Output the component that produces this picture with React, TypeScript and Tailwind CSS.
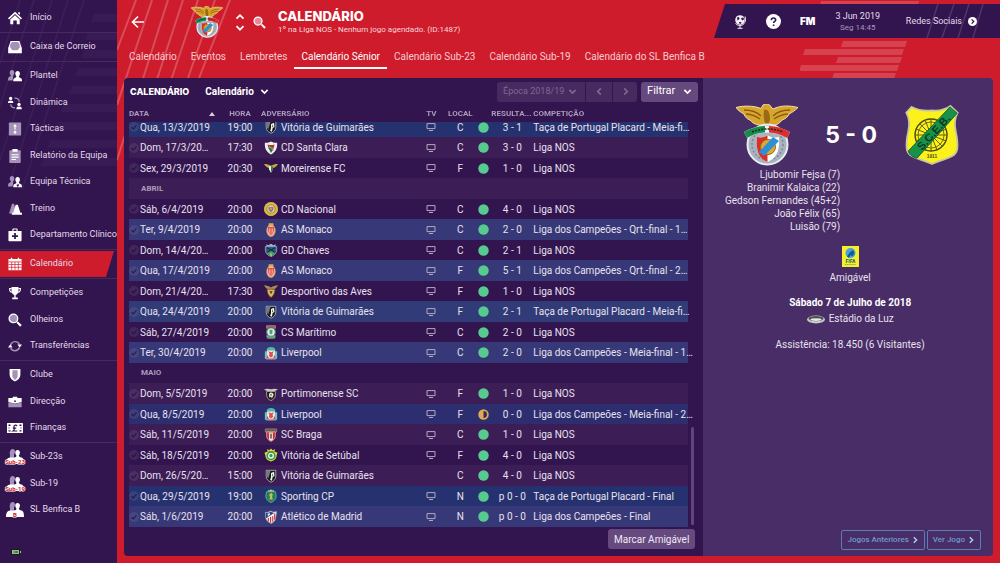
import { useLayoutEffect, useRef, type ReactNode } from "react";

type IconProps = { className?: string };

const DIM = "#a592b8";

/* ---------- sidebar icons ---------- */

const People = ({ left = DIM, right = "#fff" }: { left?: string; right?: string }) => (
  <>
    <g fill={left}>
      <path d="M4.600 1.200c1.700 0 2.600 1.200 2.600 2.800 0 1.500-.6 2.600-1.200 3.300L5.600 11 5 13H0c0-3 .8-3.800 3-4.600.5-.2.500-.8.300-1.200C2.500 6.500 2 5.500 2 4c0-1.600.9-2.800 2.600-2.800z" />
    </g>
    <g fill={right}>
      <path d="M11 2.200c1.700 0 2.600 1.200 2.600 2.800 0 1.500-.6 2.500-1.200 3.200 0 1 .4 1.300 1.400 1.700 1.700.6 2.200 1.400 2.200 4.100H6c0-2.700.5-3.500 2.200-4.100 1-.4 1.400-.7 1.400-1.700C9 7.500 8.400 6.500 8.400 5c0-1.600.9-2.800 2.600-2.800z" />
    </g>
  </>
);

const icons: Record<string, ReactNode> = {
  home: (
    <g fill="#fff">
      <path d="M8 .8 16 8.300l-1.300 1.300L8 3.400 1.300 9.600 0 8.300z" />
      <path d="M8 4.800 13.400 9.800V15H10v-4.200H6V15H2.600V9.800z" />
      <path d="M11.600 1.400h2v3.200l-2-1.800z" />
    </g>
  ),
  inbox: (
    <>
      <path d="M3 1h10l2.800 8.200V15H.2V9.200z" fill="#fff" />
      <path d="M4.500 2.200h7c1.800 1.600 2.500 4 2 6.400L11 11.600H5L2.500 8.600c-.5-2.400.2-4.800 2-6.400z" fill={DIM} />
    </>
  ),
  squad: <People />,
  dynamics: (
    <>
      <g fill="#fff">
        <circle cx="3" cy="2.800" r="1.900" />
        <path d="M0 8c0-2 .8-2.800 3-2.800S6 6 6 8z" />
        <circle cx="12.600" cy="9.600" r="1.900" />
        <path d="M9.600 15c0-2.200.8-3 3-3s3.200.8 3.200 3z" />
      </g>
      <g fill="none" stroke={DIM} strokeWidth="1.500">
        <path d="M7.400 2.400c3-.4 5.200 1.200 5.400 4" />
        <path d="M3 9.600c.4 2.600 2 4 5 4" />
      </g>
    </>
  ),
  tactics: (
    <>
      <rect x="1" y=".5" width="14" height="15" rx="1" fill={DIM} />
      <g fill="#fff">
        <path d="M8 2.200 10.200 5H8.700v3H7.300V5H5.800z" />
        <circle cx="8" cy="11.800" r="1.500" />
        <circle cx="8" cy="9" r=".7" />
      </g>
    </>
  ),
  report: (
    <>
      <rect x="1.500" y="1.500" width="13" height="14.500" rx="1" fill={DIM} />
      <g fill="#fff">
        <rect x="5" y="0" width="6" height="3" rx=".6" />
        <path d="M4 6h8v1.200H4zM4 8.700h8v1.200H4zM4 11.400h5v1.200H4z" />
      </g>
    </>
  ),
  staff: (
    <>
      <People />
      <path d="m10.200 9.800 1 1.600 1-1.600.2 2.600-1.200 1.200-1.200-1.200z" fill="#32144f" />
    </>
  ),
  training: (
    <>
      <path d="M4.600 2H7l2.400 11H1.200z" fill={DIM} />
      <path d="M8.800 3h2.400l3 9.400H16V14.500H4.400v-2.100H6z" fill="#fff" />
    </>
  ),
  medical: (
    <>
      <path d="M5 3.400V1.400C5 .8 5.400.6 6 .6h4c.6 0 1 .2 1 .8v2h4.500V14c0 .6-.3 1-1 1h-13c-.7 0-1-.4-1-1V3.400zm1.300 0h3.400V1.800H6.300z" fill="#fff" />
      <path d="M7 5.800h2v2.400h2.400v2H9v2.400H7v-2.400H4.600v-2H7z" fill="#32144f" />
    </>
  ),
  calendar: (
    <>
      <g fill="#fff">
        <path d="M3.200.8h1.600v3H3.200zM11.200.8h1.600v3h-1.600z" />
        <rect x=".5" y="2.200" width="15" height="12.800" rx=".6" />
      </g>
      <path d="M.5 5.600h15M.5 8.600h15M.5 11.800h15M4.200 5.600V15M8 5.600V15M11.800 5.600V15" stroke="#ce1c2c" strokeWidth=".8" />
    </>
  ),
  trophy: (
    <g fill="#fff">
      <path d="M4 1h8v4.500c0 2.600-1.500 4.500-3.200 4.900V13h2.400v2H4.800v-2h2.400v-2.600C5.500 10 4 8.100 4 5.500z" />
      <path d="M4 3H1.800c0 2.400.8 4 2.800 4M12 3h2.200c0 2.400-.8 4-2.800 4" fill="none" stroke="#fff" strokeWidth="1.200" />
    </g>
  ),
  search: (
    <>
      <path d="m9.600 11 1.500-1.500 4.600 4.300-1.800 1.900z" fill="#fff" />
      <circle cx="6.200" cy="6.200" r="4.900" fill={DIM} stroke="#fff" strokeWidth="1.500" />
    </>
  ),
  transfers: (
    <>
      <path d="M3 9.200C2.400 5.600 4.800 3 8 3c2.300 0 4.200 1.200 5 3.200" fill="none" stroke={DIM} strokeWidth="1.700" />
      <path d="M10.800 6.200H16L13.400 9.600z" fill="#fff" />
      <path d="M13.200 9.600C12.200 12 10.400 13.400 8 13.400c-2.200 0-4-1-5-3" fill="none" stroke={DIM} strokeWidth="1.700" />
      <path d="M5.200 9.800H0L2.600 6.400z" fill="#fff" />
    </>
  ),
  shield: (
    <>
      <path d="M1.800 1h12.400v6.500c0 3.800-2.600 6.400-6.200 8-3.600-1.600-6.200-4.200-6.200-8z" fill="#fff" />
      <path d="M5 2.500h6V10c-.6 1.600-1.600 2.800-3 3.600-1.400-.8-2.400-2-3-3.600z" fill={DIM} />
    </>
  ),
  briefcase: (
    <>
      <path d="M5.400 3.400V2h5.200v1.400h5V8l-6.200 1.600H6.600L.4 8V3.400z" fill="#fff" />
      <path d="M.4 8.400 6.600 10h2.800l6.200-1.600V14H.4z" fill={DIM} />
      <circle cx="8" cy="7" r="1" fill="#32144f" />
    </>
  ),
};

const MenuIcon = ({ name }: { name: string }) => {
  if (name === "finance")
    return (
      <svg viewBox="0 0 16 10" className="h-[10px] w-4" aria-hidden="true">
        <rect width="16" height="10" rx=".6" fill="#fff" />
        <path d="M1.500 1.500h2v1.400h-2zM12.500 1.500h2v1.400h-2zM1.500 7.200h2v1.400h-2zM12.500 7.200h2v1.400h-2zM1.500 4.400h1v1.200h-1zM13.500 4.400h1v1.200h-1z" fill="#32144f" />
        <path d="M10 3.100C9.400 1.600 6.800 1.600 7 3.800L7.300 6c0 1-.5 1.600-1.200 2h4.200M5.800 5.200h3.400" fill="none" stroke="#32144f" strokeWidth="1.200" />
      </svg>
    );
  if (name.startsWith("team:"))
    return (
      <svg viewBox="0 0 18 16" className="h-4 w-[18px] overflow-visible" aria-hidden="true">
        <path d="M6.700 0C8.200 0 9 1.100 9 2.600 9 4 8.400 5 8 5.600V9H4V5.600C3.600 5 3.600 4 4 2.600 4.200 1.100 5.200 0 6.700 0z" fill={DIM} />
        <path d="M11.600 1c1.500 0 2.300 1 2.300 2.500 0 1.400-.6 2.300-1.100 2.900.1 1.200 1.200 1.600 2.600 2.100C17.500 9.300 18 11 18 15H0C0 10.500 1.500 9 4 8.500h4c1.600-.3 2.600-.8 2.400-2.100-.6-.6-1.100-1.500-1.100-2.900C9.300 2 10.100 1 11.600 1z" fill="#fff" />
        <text
          x="9"
          y="14.500"
          fontSize="6"
          fontWeight="700"
          textAnchor="middle"
          fill="#ce1c2c"
          stroke="#fff"
          strokeWidth="1.200"
          paintOrder="stroke"
          fontFamily="Roboto, sans-serif"
        >
          {name.slice(5)}
        </text>
      </svg>
    );
  return (
    <svg viewBox="0 0 16 16" className="size-[14px]" aria-hidden="true">
      {icons[name]}
    </svg>
  );
};

/* ---------- club crests ---------- */

const Benfica = ({ className }: IconProps) => (
  <svg viewBox="0 0 62 62" className={className} role="img" aria-label="SL Benfica">
    <path d="M0 3.500c8-2 17-2 25 1l2-3.500c3-2 7-1 8 2l2 2c8-4 17-3.500 25-1.500-3 3-6 5-9 6.500-1 3-4 5-7 6-2 3-5 5-8 5l-3 3H27l-4-3c-4-.5-7-2.500-9-5-3-1-5-3-6-6C5 8.500 2 6.500 0 3.500z" fill="#d8a62a" stroke="#f1ddb0" strokeWidth="1" />
    <path d="M8 6c7 0 13 2 17 6M10 10c6 .5 10 2 14 5M54 6c-7 0-13 2-17 6M52 10c-6 .5-10 2-14 5" stroke="#8a5c12" strokeWidth="1.500" fill="none" />
    <path d="M28 6c2-1 5 0 5 3 2 5 1 9-2 13-3-4-4-9-3-16z" fill="#9a6a16" />
    <circle cx="31.500" cy="40.500" r="20" fill="#a9b3c0" stroke="#e8edf2" strokeWidth="2" />
    <circle cx="31.500" cy="40.500" r="15.500" fill="none" stroke="#7d8897" strokeWidth="1.500" strokeDasharray="2 2" />
    <path d="M21 33c4 1 7 .5 10.500-1.500C35 33.500 39 34 43 33c1 13-2 21-11.500 25C22 54 20 46 21 33z" fill="#fff" />
    <path d="M21 33c4 1 7 .5 10.500-1.500V58C22 54 20 46 21 33z" fill="#dc2f2c" />
    <circle cx="32" cy="43" r="7.500" fill="#e0a92c" stroke="#9a6a16" />
    <path d="m23 48 14-15 6 4-15 15z" fill="#2f8fd6" />
    <path d="M8 28c14-8 32-8 46 0l-3 6c-12-7-28-7-40 0z" fill="#f4f4f4" />
    <path d="M8 28c7-4 14-6 21-6v6.500c-6 .2-12 2-18 5.500z" fill="#178a4c" />
    <path d="M33 22c7 0 14 2 21 6l-3 6c-6-3.500-12-5.300-18-5.500z" fill="#dc2f2c" />
    <path d="M16 28c10-4 21-4 31 0" stroke="#10301d" strokeWidth="1.500" strokeDasharray="2 1.200" fill="none" />
  </svg>
);

const Sceb = ({ className }: IconProps) => (
  <svg viewBox="-1 -1 56 64" className={className} role="img" aria-label="SCEB">
    <path
      d="M6 2C13 5.500 19 6.500 27 5.500 34 6.500 40 5 46 1L53.500 8C50 14 50 20 51.500 27 53 34 54 40 53 46 51 55 40 55 27 61 14 55 3 55 1 46 0 40 1 34 2.500 27 4 20 4 14 .5 8z"
      fill="#fbf21c"
      stroke="#c9c4a4"
      strokeWidth="1.800"
    />
    <g stroke="#4e4a10" fill="none">
      <circle cx="26" cy="31" r="16.500" strokeWidth="1.500" />
      <circle cx="26" cy="31" r="13.500" strokeWidth=".8" />
      <path d="M26 15v32M10 31h32M14.700 19.700l22.600 22.600M14.700 42.300l22.600-22.600M20 16l12 30M32 16 20 46M11 25l30 12M11 37l30-12" strokeWidth=".9" />
    </g>
    <path d="M2.500 47.500 45.500 2 53 8.500 11.500 55C6 53.500 3.500 51 2.500 47.500z" fill="#17924a" stroke="#0b4f27" strokeWidth=".8" />
    <text x="29" y="33" fontSize="11.500" fontWeight="700" textAnchor="middle" transform="rotate(-48 28 29)" fill="#0c3a1d" fontFamily="Liberation Sans, sans-serif">
      S.C.E.B.
    </text>
    <text x="27" y="54.500" fontSize="5" fontWeight="700" textAnchor="middle" fill="#4e4a10" fontFamily="Liberation Sans, sans-serif">
      1911
    </text>
  </svg>
);

const SHIELD = "M2.500 1.500h11V8c0 3.600-2.300 5.800-5.500 7.200C4.800 13.800 2.500 11.600 2.500 8z";

const crests: Record<string, ReactNode> = {
  "Vitória de Guimarães": (
    <>
      <path d={SHIELD} fill="#17181b" stroke="#d5d5d5" strokeWidth=".8" />
      <path d="M3 2h4.500L5 10.500C3.700 9.500 3 8 3 6z" fill="#77797c" />
      <path d="M8 4.500 11.500 3l.5 5-2 1-1 4.500-2-1L8 9z" fill="#f1f1f1" />
      <path d="m9.500 5 1 2-1 1.500z" fill="#17181b" />
    </>
  ),
  "CD Santa Clara": (
    <>
      <path d="M1 2c2.500.3 5-.2 7-1.300C10 1.800 12.500 2.300 15 2c.4 6-1.500 10.700-7 13.300C2.500 12.700.6 8 1 2z" fill="#f3eeee" />
      <path d="M4 4c3 1 5 .8 8 0l-1 4.500-3-1.700L5 8z" fill="#a43b3f" />
      <path d="m5 8 3-1.400L11 9l-3 4.600z" fill="#2d7046" />
      <path d="m6 6 4.500 4" stroke="#d9b44a" />
    </>
  ),
  "Moreirense FC": (
    <>
      <path d="M0 3.500c3-.2 5 .6 8 1.800 3-1.200 5-2 8-1.800-1.500 2.600-3.500 4.200-5.500 4.400L8 13 5.500 7.900C3.500 7.700 1.500 6.100 0 3.500z" fill="#c7a63b" />
      <path d="M5.800 6h4.400v3.500L8 13.500 5.800 9.500z" fill="#f4f4ea" />
      <path d="M8 6h2.200v3.500L8 13z" fill="#1f7a4a" />
    </>
  ),
  "CD Nacional": (
    <>
      <circle cx="8" cy="8" r="7.700" fill="#e5b62d" stroke="#f4dd94" strokeWidth=".6" />
      <circle cx="8" cy="8" r="4.800" fill="#d8cfae" stroke="#97701c" strokeWidth=".8" />
      <path d="M5 6h6l-.6 3.500L8 11.500 5.600 9.500z" fill="#6c6f86" />
      <path d="M6.500 7.200h3v1.600h-3z" fill="#e5b62d" />
    </>
  ),
  "AS Monaco": (
    <>
      <path d="M5 3.200 5.400.4h5.200l.4 2.800z" fill="#dcae45" />
      <ellipse cx="8" cy="8.700" rx="4.800" ry="6.600" fill="#f0b7a8" stroke="#d9a257" strokeWidth="1" />
      <path d="M4.400 4.500h7.200L11 10l-2.500 4h-1L5 10z" fill="#dc4b47" />
      <path d="M6.300 6v5M8 6v8M9.700 6v5" stroke="#f6d4c9" strokeWidth=".7" />
    </>
  ),
  "GD Chaves": (
    <>
      <path d="M3 4 2.500 1.500 5 2.500 8 .8l3 1.700 2.500-1L13 4z" fill="#a9b5bd" />
      <path d="M1.500 4h13v4c0 4-3 6.200-6.500 7.500C4.500 14.200 1.500 12 1.500 8z" fill="#2d5b93" stroke="#a9b5bd" strokeWidth=".8" />
      <path d="M3 11.500 8 9l5 2.500c-1.300 1.600-3 2.600-5 3.400-2-.8-3.700-1.800-5-3.400z" fill="#48a04a" />
      <path d="m3.500 5.500 9 5m0-5-9 5" stroke="#192a3f" strokeWidth="1.200" />
      <path d="M8 12v3" stroke="#e6efe6" />
    </>
  ),
  "Desportivo das Aves": (
    <>
      <path d="M0 1.500c3 .2 5.500 1 8 2.500 2.500-1.500 5-2.300 8-2.500-1.600 3-3.400 4.500-6 5L8 9 6 6.500C3.400 6 1.600 4.500 0 1.500z" fill="#a58e57" />
      <path d="M3.500 6h9c0 4-1.500 7.500-4.500 9.500C5 13.500 3.500 10 3.500 6z" fill="#d7bd64" stroke="#5b431f" strokeWidth=".8" />
      <path d="m6 8 2 4 2-4z" fill="#99352e" />
    </>
  ),
  "CS Marítimo": (
    <>
      <path d="M3 .8h10v3H3z" fill="#bb4650" stroke="#e9e2d9" strokeWidth=".5" />
      <circle cx="8" cy="8" r="5" fill="#e7ebe4" stroke="#368367" strokeWidth="1.400" />
      <path d="M6.300 5.500h3.400v4l-1.700 1.300-1.700-1.300z" fill="#4f9c7e" />
      <path d="M3 12.300h10l-1 2.900H4z" fill="#4c9d77" stroke="#e9e2d9" strokeWidth=".5" />
    </>
  ),
  Liverpool: (
    <>
      <path d="M3 4C4 .2 12 .2 13 4l-.5 2h-9z" fill="#50b7aa" />
      <path d="M1 6h2.500v8.500H1zM12.500 6H15v8.500h-2.500z" fill="#6fc4b9" />
      <path d="M3.500 5h9v4.500c0 2.500-2 4.500-4.500 5.500-2.500-1-4.500-3-4.500-5.500z" fill="#f0ece8" />
      <path d="m5 6 3 1.200L11 6l-1.200 3 .8 2L8 13.500 5.400 11l.8-2z" fill="#dc4f58" />
      <path d="M2.500 12.500 8 14.300l5.500-1.800v2.900h-11z" fill="#d8858a" />
    </>
  ),
  "Portimonense SC": (
    <>
      <path d="M0 2.500c3-.8 5-.8 8 0 3-.8 5-.8 8 0-2 2-5 2.700-8 2.700S2 4.500 0 2.500z" fill="#c9cac4" />
      <path d="M3 5h10v4c0 3.400-2 5.200-5 6.500C5 14.200 3 12.400 3 9z" fill="#1b1b1c" stroke="#d9cfaa" strokeWidth=".8" />
      <path d="M8 6.200c2 0 3 1.200 3 3L9 13l-1-2-1.800 1C5.300 9 5.500 6.200 8 6.200z" fill="#eae6dc" />
      <path d="m7.200 8 2 .8-1.400 1.600z" fill="#1b1b1c" />
    </>
  ),
  "SC Braga": (
    <>
      <path d="M1.500 1h13v3.500h-13z" fill="#6d5a51" stroke="#b7a391" strokeWidth=".6" />
      <path d="M3 4.500h10V9c0 3-2 5-5 6.300C5 14 3 12 3 9z" fill="#cf2f33" stroke="#e3d7ce" strokeWidth=".7" />
      <path d="M5.800 5h4.400v8.500L8 14.800l-2.200-1.300z" fill="#ece4df" />
      <path d="M7 6.500h2V12H7z" fill="#705f63" />
    </>
  ),
  "Vitória de Setúbal": (
    <>
      <path d="m4 4-.5-3L6 2.500 8 .5l2 2L12.500 1 12 4z" fill="#e8d22f" />
      <path d="M.5 5.500 4 4h8l3.500 1.500-1 2.500c0 4-2.500 6.300-6.500 7.300C4 14.300 1.500 12 1.500 8z" fill="#d6d935" />
      <circle cx="8" cy="8.800" r="4.300" fill="#e5f0e4" stroke="#2c9754" strokeWidth="1.600" />
      <path d="M8 6.500 10 8l-.8 2.400H6.800L6 8z" fill="#2c9754" />
    </>
  ),
  "Sporting CP": (
    <>
      <path d="M4.500 3 5 .8l1.500.8L8 .4l1.500 1.200L11 .8l.5 2.200z" fill="#b7cda6" />
      <path d="M3 3h10l1 5c0 3.600-2.500 6-6 7.500C4.500 14 2 11.600 2 8z" fill="#1b8158" stroke="#9fc2ad" strokeWidth=".7" />
      <path d="M6.500 5.500 9 4.500l1 2L9.200 9l1 3H6l1-3-1-1.500z" fill="#cfb95f" />
    </>
  ),
  "Atlético de Madrid": (
    <>
      <path d="M1.500 2.500c2 .4 4 0 6-1.500 2 1.500 4.500 1.600 7 .8L13 11c-1 2-3 3.400-5 4.500C5 14 2.500 12 2 9z" fill="#f3efef" stroke="#8fa0c0" strokeWidth=".7" />
      <path d="M5 9v4M7.500 8v6.500M10 7v6.500M12.200 4v7" stroke="#d13438" strokeWidth="1.300" />
      <path d="M2 3.200c2 .2 4-.2 5.500-1.300l4 1.500L2.400 9.500z" fill="#2c4684" />
      <path d="m4 4.500 2.500-1 .5 1.800L4.500 7z" fill="#e7e4e0" />
    </>
  ),
};

/* ---------- small glyphs ---------- */

const Chevron = ({ d, className }: { d: string; className: string }) => (
  <svg viewBox="0 0 10 10" className={className} aria-hidden="true">
    <path d={d} fill="none" stroke="currentColor" strokeWidth="1.800" />
  </svg>
);
const DOWN = "M1.500 3.200 5 6.700l3.500-3.500";
const UP = "M1.500 6.700 5 3.200l3.500 3.500";
const LEFT = "M6.500 1.500 3 5l3.500 3.500";
const RIGHT = "M3.500 1.500 7 5 3.500 8.500";

const Monitor = () => (
  <svg viewBox="0 0 10 8" className="mx-auto h-2 w-[10px] text-[#b3a7c4]" aria-label="TV" role="img">
    <path d="M1 .6h8v5H1z" fill="none" stroke="currentColor" />
    <path d="M3 7h4v1H3z" fill="currentColor" />
  </svg>
);

const Result = ({ draw }: { draw?: boolean }) => (
  <svg viewBox="0 0 12 12" className="mx-auto size-[11px]" role="img" aria-label={draw ? "Empate" : "Vitória"}>
    <circle cx="6" cy="6" r="5.700" fill={draw ? "#e3a94e" : "#57cb8f"} />
    {draw && <path d="M6 2.200a3.800 3.800 0 0 1 0 7.600z" fill="#2d2e6f" />}
  </svg>
);

const Tick = () => (
  <svg viewBox="0 0 10 10" className="size-[10px] shrink-0" aria-hidden="true">
    <circle cx="5" cy="5" r="5" fill="#fff" opacity=".08" />
    <path d="m2.600 5.200 1.700 1.600 3.200-3.400" fill="none" stroke="#1d0b38" strokeOpacity=".7" strokeWidth="1.200" />
  </svg>
);

/* ---------- data ---------- */

const menu: [string, string][][] = [
  [["home", "Início"]],
  [["inbox", "Caixa de Correio"]],
  [
    ["squad", "Plantel"],
    ["dynamics", "Dinâmica"],
    ["tactics", "Tácticas"],
    ["report", "Relatório da Equipa"],
    ["staff", "Equipa Técnica"],
    ["training", "Treino"],
    ["medical", "Departamento Clínico"],
  ],
  [["calendar", "Calendário"]],
  [
    ["trophy", "Competições"],
    ["search", "Olheiros"],
    ["transfers", "Transferências"],
  ],
  [
    ["shield", "Clube"],
    ["briefcase", "Direcção"],
    ["finance", "Finanças"],
  ],
  [
    ["team:Sub-23", "Sub-23s"],
    ["team:Sub-19", "Sub-19"],
    ["team:B", "SL Benfica B"],
  ],
];

const tabs = ["Calendário", "Eventos", "Lembretes", "Calendário Sénior", "Calendário Sub-23", "Calendário Sub-19", "Calendário do SL Benfica B"];

type Match = { date: string; time: string; team: string; venue: string; score: string; comp: string; draw?: boolean; noTv?: boolean };
type Row = Match | { month: string };

const m = (date: string, time: string, team: string, venue: string, score: string, comp: string, extra: Partial<Match> = {}): Match => ({
  date,
  time,
  team,
  venue,
  score,
  comp,
  ...extra,
});

const NOS = "Liga NOS";
const rows: Row[] = [
  m("Qua, 13/3/2019", "19:00", "Vitória de Guimarães", "C", "3 - 1", "Taça de Portugal Placard - Meia-fi…"),
  m("Dom, 17/3/20…", "17:30", "CD Santa Clara", "C", "3 - 0", NOS),
  m("Sex, 29/3/2019", "20:30", "Moreirense FC", "F", "1 - 0", NOS),
  { month: "ABRIL" },
  m("Sáb, 6/4/2019", "20:00", "CD Nacional", "C", "4 - 0", NOS),
  m("Ter, 9/4/2019", "20:00", "AS Monaco", "C", "2 - 0", "Liga dos Campeões - Qrt.-final - 1…"),
  m("Dom, 14/4/20…", "20:00", "GD Chaves", "C", "2 - 1", NOS),
  m("Qua, 17/4/2019", "20:00", "AS Monaco", "F", "5 - 1", "Liga dos Campeões - Qrt.-final - 2…"),
  m("Dom, 21/4/20…", "17:30", "Desportivo das Aves", "F", "1 - 0", NOS),
  m("Qua, 24/4/2019", "20:00", "Vitória de Guimarães", "F", "2 - 1", "Taça de Portugal Placard - Meia-fi…"),
  m("Sáb, 27/4/2019", "20:00", "CS Marítimo", "C", "2 - 0", NOS),
  m("Ter, 30/4/2019", "20:00", "Liverpool", "C", "2 - 0", "Liga dos Campeões - Meia-final - 1…"),
  { month: "MAIO" },
  m("Dom, 5/5/2019", "20:00", "Portimonense SC", "F", "1 - 0", NOS),
  m("Qua, 8/5/2019", "20:00", "Liverpool", "F", "0 - 0", "Liga dos Campeões - Meia-final - 2…", { draw: true }),
  m("Sáb, 11/5/2019", "20:00", "SC Braga", "C", "1 - 0", NOS),
  m("Sáb, 18/5/2019", "20:00", "Vitória de Setúbal", "F", "4 - 0", NOS),
  m("Dom, 26/5/20…", "15:00", "Vitória de Guimarães", "C", "4 - 0", NOS, { noTv: true }),
  m("Qua, 29/5/2019", "19:00", "Sporting CP", "N", "p 0 - 0", "Taça de Portugal Placard - Final"),
  m("Sáb, 1/6/2019", "20:00", "Atlético de Madrid", "N", "p 0 - 0", "Liga dos Campeões - Final"),
];

const rowColour = (comp: string) => {
  if (comp.startsWith("Taça")) return "bg-[#26326f] even:bg-[#303b77]";
  if (comp.startsWith("Liga dos")) return "bg-[#2d2e6f] even:bg-[#373877]";
  return "even:bg-[#3c1d56]";
};

const scorers = ["Ljubomir Fejsa (7)", "Branimir Kalaica (22)", "Gedson Fernandes (45+2)", "João Félix (65)", "Luisão (79)"];

/* ---------- sections ---------- */

const Sidebar = () => (
  <nav className="relative flex w-[117px] shrink-0 flex-col overflow-hidden bg-[#32144f] pt-[5px] text-[9px] text-[#e4dceb]">
    <svg viewBox="0 0 117 250" className="absolute top-0 left-0 h-[250px] w-full" aria-hidden="true">
      <g stroke="#fff" strokeOpacity=".05">
        <path d="M20 0-8 88M34 0-4 118M52 0 0 160M68 0 12 176M84 0 22 190" fill="none" strokeWidth="1.500" />
      </g>
      <g fill="#fff" fillOpacity=".03">
        <path d="M94 14h23v8H91zM88 32h29v8H85zM84 50h33v8H81zM78 68h39v8H75zM72 86h45v8H69zM64 104h53v8H61zM58 122h59v8H55zM50 140h67v8H47zM44 158h73v8H41z" />
      </g>
    </svg>
    {menu.map((group, g) => (
      <ul key={g} className={`relative ${g > 0 ? "mt-px border-t border-[#46295f] pt-px" : ""}`}>
        {group.map(([icon, label]) => (
          <li key={label} className="h-[26px] even:h-[27px]">
            <a
              href="#"
              className={`flex h-full items-center whitespace-nowrap ${
                label === "Calendário" ? "w-[114px] bg-[#ce1c2c] [clip-path:polygon(0_0,100%_0,calc(100%-8px)_100%,0_100%)]" : ""
              }`}
            >
              <span className="flex w-[30px] shrink-0 justify-center">
                <MenuIcon name={icon} />
              </span>
              {label}
            </a>
          </li>
        ))}
      </ul>
    ))}
    <svg viewBox="0 0 10 6" className="mt-auto mb-2 ml-[11px] h-[6px] w-[10px]" aria-label="Bateria" role="img">
      <rect width="9" height="6" rx=".5" fill="#1a1a12" />
      <path d="M1 1h7v4H1zM9 2h1v2H9z" fill="#8fc48a" />
      <path d="M2 3h2M4.500 2.500h2v1h-2z" fill="none" stroke="#1a3a1a" strokeWidth=".6" />
    </svg>
  </nav>
);

const StatusBar = () => (
  <div className="relative ml-auto flex h-[34px] w-[286px] items-center bg-[#32144f] pr-[23px] pl-[19px] text-[9px] text-[#e4dceb] [clip-path:polygon(11px_0,100%_0,100%_100%,0_100%)]">
    <svg viewBox="0 0 60 34" className="absolute right-4 h-[34px] w-[60px]" aria-hidden="true">
      <path d="m14 0-11 34M30 0 18 34M45 0 34 34M59 0 49 34" stroke="#fff" strokeOpacity=".14" strokeWidth="1.500" />
    </svg>
    <button type="button" aria-label="Mundo">
      <svg viewBox="0 0 14 15" className="h-[15px] w-[14px]" aria-hidden="true">
        <circle cx="7" cy="6" r="4.800" fill="#f3eff6" />
        <path d="M4 3.500 6 3l.5 2-2 1.500zM8 4l2.500-.5.5 2L9 6.500zM6 8h2.500L8 9.800H6.500z" fill="#32144f" />
        <path d="M12 2.500c1.500 4-.5 9-5 9-2 0-3.500-.6-4.500-2M7 11.500V14M4.500 14.300h5" fill="none" stroke="#f3eff6" />
      </svg>
    </button>
    <button type="button" aria-label="Ajuda" className="ml-[19px]">
      <svg viewBox="0 0 15 15" className="size-[15px]" aria-hidden="true">
        <circle cx="7.500" cy="7.500" r="7.500" fill="#fff" />
        <path d="M5.300 6.200c0-3 4.600-2.800 4.400-.2-.1 1.500-2.100 1.500-2.100 3.100M7.600 10.400v1.600" fill="none" stroke="#32144f" strokeWidth="1.600" />
      </svg>
    </button>
    <button type="button" className="ml-[19px] font-['Inter',sans-serif] text-[10px] font-black text-white">
      FM
    </button>
    <div className="ml-[20px] pt-px text-center leading-[11px]">
      <div>3 Jun 2019</div>
      <div className="text-[8px] text-[#a797b8]">Seg 14:45</div>
    </div>
    <button type="button" className="relative ml-auto flex items-center gap-[6px] pt-px">
      Redes Sociais
      <svg viewBox="0 0 10 10" className="size-[9px]" aria-hidden="true">
        <circle cx="5" cy="5" r="5" fill="#fff" />
        <path d="M4 2.600 6.400 5 4 7.400" fill="none" stroke="#32144f" strokeWidth="1.400" />
      </svg>
    </button>
  </div>
);

const Header = () => (
  <header className="relative">
    <div className="flex h-[42px] items-start pt-1">
      <div className="flex h-9 items-center pl-[14px]">
        <button type="button" aria-label="Voltar">
          <svg viewBox="0 0 14 14" className="size-[14px]" aria-hidden="true">
            <path d="M13 7H2M7 1.500 1.500 7 7 12.500" fill="none" stroke="#fff" strokeWidth="1.600" />
          </svg>
        </button>
        <Benfica className="ml-[46px] size-8" />
        <div className="ml-[12px] flex flex-col gap-px text-white">
          <button type="button" aria-label="Anterior">
            <Chevron d={UP} className="size-[10px]" />
          </button>
          <button type="button" aria-label="Seguinte">
            <Chevron d={DOWN} className="size-[10px]" />
          </button>
        </div>
        <button type="button" aria-label="Procurar" className="ml-[8px]">
          <svg viewBox="0 0 16 16" className="size-[13px]" aria-hidden="true">
            <path d="m9.600 11 1.500-1.500 4.600 4.300-1.800 1.900z" fill="#fff" />
            <circle cx="6.200" cy="6.200" r="4.900" fill="#e58a94" stroke="#fff" strokeWidth="1.500" />
          </svg>
        </button>
        <div className="ml-[12px] whitespace-nowrap">
          <h1 className="font-['Inter',sans-serif] text-[13px] leading-[15px] font-extrabold text-white">CALENDÁRIO</h1>
          <p className="text-[8px] leading-[12px] text-[#f8d5d9]">1º na Liga NOS - Nenhum jogo agendado. (ID:1487)</p>
        </div>
      </div>
      <StatusBar />
    </div>
    <nav className="flex h-[27px] pl-[5px] text-[10px]">
      {tabs.map((tab) => (
        <a
          key={tab}
          href="#"
          className={`flex items-center border-b-2 px-[7px] pt-1 whitespace-nowrap ${
            tab === "Calendário Sénior" ? "border-white text-white" : "border-transparent text-[#f6ccd1]"
          }`}
        >
          {tab}
        </a>
      ))}
    </nav>
  </header>
);

const Fixtures = () => {
  const scroller = useRef<HTMLDivElement>(null);
  useLayoutEffect(() => {
    const el = scroller.current;
    if (el) el.scrollTop = el.scrollHeight;
  }, []);

  return (
    <section className="flex min-h-0 min-w-0 flex-col bg-[#32144f] pb-[7px]">
      <div className="flex h-[27px] shrink-0 items-center pr-[5px] pl-[6px]">
        <h2 className="font-['Inter',sans-serif] text-[9px] font-extrabold text-white">CALENDÁRIO</h2>
        <div className="relative ml-4 flex items-center text-white">
          <select aria-label="Vista" className="w-[64px] appearance-none bg-transparent text-[10px] font-bold outline-none">
            <option>Calendário</option>
          </select>
          <Chevron d={DOWN} className="pointer-events-none absolute right-0 size-[9px]" />
        </div>
        <div className="ml-auto flex h-5 items-stretch divide-x divide-[#32144f] overflow-hidden rounded-[3px] bg-[#462a60] text-[#7f6892]">
          <div className="relative flex items-center">
            <select aria-label="Época" className="h-full w-[88px] appearance-none bg-transparent pl-[6px] text-[9px] outline-none">
              <option>Época 2018/19</option>
            </select>
            <Chevron d={DOWN} className="pointer-events-none absolute right-[8px] size-[9px]" />
          </div>
          <button type="button" aria-label="Época anterior" className="flex w-[27px] items-center justify-center">
            <Chevron d={LEFT} className="size-[9px]" />
          </button>
          <button type="button" aria-label="Época seguinte" className="flex w-6 items-center justify-center">
            <Chevron d={RIGHT} className="size-[9px]" />
          </button>
        </div>
        <button type="button" className="ml-1 flex h-5 items-center gap-2 rounded-[3px] bg-[#66497f] px-[6px] text-[11px] text-white">
          Filtrar
          <Chevron d={DOWN} className="size-[9px]" />
        </button>
      </div>

      <div className="relative flex min-h-0 flex-1 pr-[7px] pl-[5px]">
        <div ref={scroller} className="min-w-0 flex-1 overflow-x-hidden overflow-y-auto pr-2 [scrollbar-width:none]">
          <table className="w-full table-fixed text-[10px] text-[#e8e1ee]">
            <thead className="sticky top-0 z-10 bg-[#32144f] text-left text-[8px] text-[#ab9bb9]">
              <tr className="h-[17px] [&>th]:p-0">
                <th className="w-[90px]">
                  <div className="flex items-center justify-between pr-1">
                    DATA
                    <svg viewBox="0 0 6 4" className="h-1 w-[6px]" aria-hidden="true">
                      <path d="M0 4 3 0l3 4z" fill="#d5cbdd" />
                    </svg>
                  </div>
                </th>
                <th className="w-[42px] text-center">HORA</th>
                <th className="w-auto">ADVERSÁRIO</th>
                <th className="w-[28px] text-center">TV</th>
                <th className="w-[30px] text-center">LOCAL</th>
                <th className="w-[16px]" aria-label="Desfecho" />
                <th className="w-[42px] whitespace-nowrap">RESULTA...</th>
                <th className="w-[155px]">COMPETIÇÃO</th>
              </tr>
            </thead>
            <tbody>
              {rows.map((row, i) =>
                "month" in row ? (
                  <tr key={i} className="h-5 even:h-[21px] even:bg-[#3c1d56]">
                    <th colSpan={8} scope="rowgroup" className="p-0 pl-3 text-left text-[8px] text-[#ab9bb9]">
                      {row.month}
                    </th>
                  </tr>
                ) : (
                  <tr key={i} className={`h-5 even:h-[21px] [&>td]:p-0 ${rowColour(row.comp)}`}>
                    <td>
                      <div className="flex items-center gap-px whitespace-nowrap">
                        <Tick />
                        {row.date}
                      </div>
                    </td>
                    <td className="text-center">{row.time}</td>
                    <td>
                      <div className="flex items-center gap-[3px] pl-[3px] whitespace-nowrap">
                        <svg viewBox="0 0 16 16" className="size-[14px]" aria-hidden="true">
                          {crests[row.team]}
                        </svg>
                        {row.team}
                      </div>
                    </td>
                    <td>{!row.noTv && <Monitor />}</td>
                    <td className="text-center">{row.venue}</td>
                    <td>
                      <Result draw={row.draw} />
                    </td>
                    <td className="text-center whitespace-nowrap">{row.score}</td>
                    <td className="whitespace-nowrap">{row.comp}</td>
                  </tr>
                ),
              )}
            </tbody>
          </table>
        </div>
        <div className="absolute right-[9px] bottom-[2px] h-[98px] w-[3px] rounded-full bg-[#5f4578]" />
      </div>

      <div className="mt-[2px] flex shrink-0 justify-end pr-[8px]">
        <button type="button" className="h-5 rounded-[3px] bg-[#66497f] px-[6px] text-[10px] text-[#f0eaf4]">
          Marcar Amigável
        </button>
      </div>
    </section>
  );
};

const MatchSummary = () => (
  <section className="flex min-w-0 flex-col bg-[#482d66] text-[10px] text-[#e8e1ee]">
    <div className="mt-[26px] flex items-center justify-between px-[33px]">
      <Benfica className="size-[62px]" />
      <p className="font-['Inter',sans-serif] text-[23px] leading-none font-bold text-white">5 - 0</p>
      <Sceb className="h-[62px] w-[56px]" />
    </div>
    <ul className="mt-[2px] w-1/2 pr-2 text-right leading-[13px]">
      {scorers.map((s) => (
        <li key={s}>{s}</li>
      ))}
    </ul>
    <div className="flex flex-col items-center pt-[13px] pl-1 leading-[13px]">
      <svg viewBox="0 0 17 21" className="h-[21px] w-[17px]" role="img" aria-label="FIFA">
        <rect width="17" height="21" fill="#f7ef27" />
        <circle cx="8.500" cy="7" r="5" fill="#4aa3dc" />
        <path d="M5 10.500 8 6l3-2 1.500 3-2 3.500-2-1.500-1.500 3z" fill="#145a9c" />
        <text x="8.500" y="16.500" fontSize="5" fontWeight="700" textAnchor="middle" fill="#1a5c86" fontFamily="Roboto, sans-serif">
          FIFA
        </text>
        <path d="M3 18.500h11" stroke="#7fae5c" strokeDasharray="1.500 .6" />
      </svg>
      <p className="mt-1">Amigável</p>
      <p className="mt-3 font-bold text-white">Sábado 7 de Julho de 2018</p>
      <p className="mt-[3px] flex items-center gap-1">
        <svg viewBox="0 0 18 10" className="h-[10px] w-[18px]" aria-hidden="true">
          <ellipse cx="9" cy="5.500" rx="9" ry="3.900" fill="#c9cbc9" />
          <ellipse cx="9" cy="4.600" rx="7.500" ry="2.600" fill="#4c4f52" />
          <ellipse cx="9" cy="5.600" rx="5.600" ry="1.300" fill="#e6e8e4" />
        </svg>
        Estádio da Luz
      </p>
      <p className="mt-[13px]">Assistência: 18.450 (6 Visitantes)</p>
    </div>
    <div className="mt-auto mr-3 mb-[6px] flex justify-end gap-[2px] text-[8px] font-medium text-[#6d9bd4]">
      {["Jogos Anteriores", "Ver Jogo"].map((label) => (
        <button key={label} type="button" className="flex h-5 items-center gap-[2px] rounded-[2px] border border-[#5a7db8] px-[5px]">
          {label}
          <Chevron d={RIGHT} className="size-2 text-[#a9d2f5]" />
        </button>
      ))}
    </div>
  </section>
);

export default function App() {
  return (
    <div className="flex h-screen overflow-hidden bg-[#ce1c2c] font-['Roboto',sans-serif]">
      <Sidebar />
      <main className="relative flex min-w-0 flex-1 flex-col pb-[7px]">
        <svg viewBox="0 0 120 200" className="absolute top-0 left-0 h-[200px] w-[120px]" aria-hidden="true">
          <path d="M19 0 0 50M35 0 0 105M51 0 0 160M66 0 12 165M81 0 34 140M98 0 60 110M113 0 82 78" fill="none" stroke="#fff" strokeOpacity=".22" strokeWidth="2" />
        </svg>
        <svg viewBox="0 0 130 80" className="absolute top-0 right-[70px] h-[80px] w-[130px]" aria-hidden="true">
          <path
            d="M21 1h98l-1 4H20zM43 41h64l-2 6H41zM5 49h99l-2 6H3zM38 57h64l-2 6H36zM1 65h98l-2 6H-1zM34 73h62l-2 6H32z"
            fill="#fff"
            fillOpacity=".17"
          />
        </svg>
        <Header />
        <div className="relative mx-[7px] mt-[9px] grid min-h-0 flex-1 grid-cols-[2fr_1fr] grid-rows-[minmax(0,1fr)] overflow-hidden rounded-[4px]">
          <Fixtures />
          <MatchSummary />
        </div>
      </main>
    </div>
  );
}
